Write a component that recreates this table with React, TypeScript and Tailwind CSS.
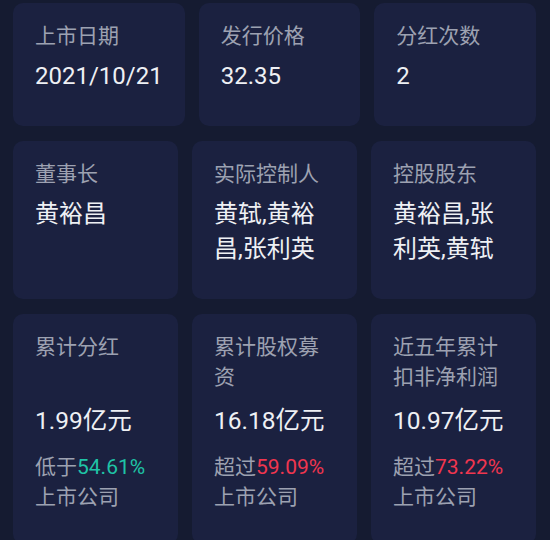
const font = { fontFamily: 'Roboto, "Noto Sans CJK SC", sans-serif' }

type Stat = { label: string; value: string }

const row1: Stat[] = [
  { label: '上市日期', value: '2021/10/21' },
  { label: '发行价格', value: '32.35' },
  { label: '分红次数', value: '2' },
]

const row2: Stat[] = [
  { label: '董事长', value: '黄裕昌' },
  { label: '实际控制人', value: '黄轼,黄裕昌,张利英' },
  { label: '控股股东', value: '黄裕昌,张利英,黄轼' },
]

const row3 = [
  { label: '累计分红', value: '1.99亿元', prefix: '低于', pct: '54.61%', up: false },
  { label: '累计股权募资', value: '16.18亿元', prefix: '超过', pct: '59.09%', up: true },
  { label: '近五年累计扣非净利润', value: '10.97亿元', prefix: '超过', pct: '73.22%', up: true },
]

function Card({ children }: { children: React.ReactNode }) {
  return (
    <div className="flex-1 basis-0 rounded-[10px] bg-[#1b2140] px-[22px] pt-[18px] pb-[32px]">
      {children}
    </div>
  )
}

export default function App() {
  return (
    <div className="min-h-[540px] w-[550px] overflow-hidden bg-[#151b31] pt-[3px] pl-[13px] pr-[14px]" style={font}>
      <div className="flex flex-col gap-[15px]">
        <div className="flex gap-[14px]">
          {row1.map((s) => (
            <Card key={s.label}>
              <div className="text-[21px] leading-[30px] text-[#9da1b1]">{s.label}</div>
              <div className="mt-[8px] whitespace-nowrap text-[24px] leading-[35px] text-[#eef0f4]">{s.value}</div>
            </Card>
          ))}
        </div>

        <div className="flex gap-[14px]">
          {row2.map((s) => (
            <Card key={s.label}>
              <div className="text-[21px] leading-[30px] text-[#9da1b1]">{s.label}</div>
              <div className="mt-[8px] text-[24px] leading-[35px] break-all text-[#eef0f4]">{s.value}</div>
            </Card>
          ))}
        </div>

        <div className="flex gap-[14px]">
          {row3.map((s) => (
            <Card key={s.label}>
              <div className="h-[60px] text-[21px] leading-[30px] text-[#9da1b1]">{s.label}</div>
              <div className="mt-[11px] text-[24.5px] leading-[35px] text-[#eef0f4]">{s.value}</div>
              <div className="mt-[14px] text-[21px] leading-[30px] text-[#9da1b1]">
                {s.prefix}
                <span className={s.up ? 'text-[#f0364f]' : 'text-[#1fc4a6]'}>{s.pct}</span>
                <br />
                上市公司
              </div>
            </Card>
          ))}
        </div>
      </div>
    </div>
  )
}
